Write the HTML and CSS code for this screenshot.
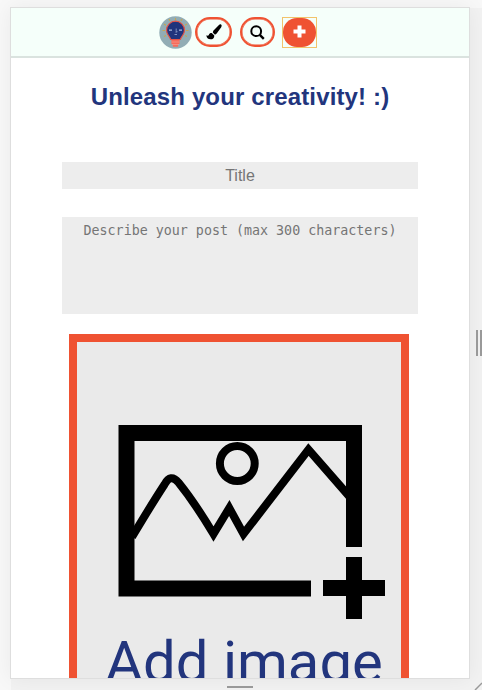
FILE: index.html
```html
<!DOCTYPE html>
<html lang="en">
<head>
<meta charset="utf-8">
<title>New post</title>
<link rel="stylesheet" href="styles.css">
</head>
<body>
<div class="device">
  <nav class="nav">
    <a class="avatar" href="#" aria-label="Home">
      <svg width="33" height="33" viewBox="0 0 33 33">
        <circle cx="16.5" cy="16.5" r="16.2" fill="#92adb5"/>
        <path d="M16.5 2v2M10 3l1 2M23 3l-1 2M5 8l2 1.2M28 8l-2 1.2M3.5 14.5h2.5M27 14.5h2.5M5 20.5l2-1M28 20.5l-2-1" stroke="#c5a654" stroke-width="1.1"/>
        <path d="M12.400 23.500h8.200v4.300l-1.500 1v2h-5.200v-2l-1.500-1z" fill="#f66b5b"/>
        <path d="M12.500 26h8M13 28.500h7" stroke="#f4a59a" stroke-width=".6"/>
        <path d="M16.500 5.200a9 9 0 0 1 9 9c0 4.200-3.200 6-4.200 9.300h-9.600c-1-3.300-4.200-5.100-4.200-9.300a9 9 0 0 1 9-9z" fill="#20347c" stroke="#e75345" stroke-width="1.200"/>
        <path d="M10 14.200h3M20 14.200h3" stroke="#a9b9dc" stroke-width="1.300"/>
        <path d="M17.200 12.500v2l1 1.500h-1.800M15.500 18.500h2.500" fill="none" stroke="#8b9dca" stroke-width=".9"/>
      </svg>
    </a>
    <a class="pill pill-brush" href="#" aria-label="Create">
      <svg width="16" height="16" viewBox="0 0 16 16"><path d="M15 .5c1 .7.700 1.700.200 2.700L10.700 9.500 9 10.700 6.800 8.600l.5-1.800L12.700 1.300C13.500.5 14.300.1 15 .5zM6 9.200l2.300 2.200c.1 2.500-1.500 3.900-3.800 3.900C2 15.300.500 13.600.400 11.200c1 .6 1.900.8 2.400-.3C3.400 9.500 4.600 8.900 6 9.200z"/></svg>
    </a>
    <a class="pill pill-search" href="#" aria-label="Search">
      <svg width="15" height="15" viewBox="0 0 15 15" fill="none" stroke="#000"><circle cx="6.200" cy="6.200" r="4.900" stroke-width="2"/><path d="M9.800 9.800l4 4" stroke-width="2.400"/></svg>
    </a>
    <a class="add" href="#" aria-label="Add post">
      <span class="add-fill"><svg width="13" height="13" viewBox="0 0 13 13"><path d="M6.500 .5v12M.5 6.500h12" stroke="#fff" stroke-width="4"/></svg></span>
    </a>
  </nav>
  <main class="content">
    <h1 class="heading">Unleash your creativity! :)</h1>
    <input class="field title" type="text" placeholder="Title">
    <textarea class="field description" placeholder="Describe your post (max 300 characters)"></textarea>
    <div class="upload">
      <svg class="picture" width="268" height="195" viewBox="0 0 268 195" fill="none" stroke="#000">
        <path d="M236 122V8H8.500v155.500H193" stroke-width="16"/>
        <circle cx="119.300" cy="38.500" r="17.400" stroke-width="8"/>
        <path d="M14 112Q35 77 46.500 59.500Q52.500 48 60.500 57.500Q77 78 95.500 109L111.300 83L125.500 109L190.500 24.500L231 71" stroke-width="8"/>
        <path d="M236 132v62M205 163h62" stroke-width="16"/>
      </svg>
      <div class="caption">Add image</div>
    </div>
  </main>
</div>
<span class="grip-right"></span>
<span class="grip-bottom"></span>
<svg class="grip-corner" width="8" height="8" viewBox="0 0 8 8"><path d="M1 8L8 1" stroke="#999" stroke-width="1.500"/></svg>
</body>
</html>
```
FILE: styles.css
```css
* { box-sizing: border-box; }

body {
  position: relative;
  height: 690px;
  margin: 0;
  padding: 7px 12px 0 10px;
  overflow: hidden;
  background: linear-gradient(#f8f8f8 0 8px, transparent 8px), linear-gradient(90deg, #f8f8f8 0 11px, #f2f2f2 11px);
  font-family: "Liberation Sans", sans-serif;
}

.device {
  display: flex;
  flex-direction: column;
  height: 672px;
  overflow: hidden;
  border: 1px solid #dedede;
  background: #fff;
  box-shadow: 0 0 20px rgba(0, 0, 0, .06);
}

.nav {
  display: flex;
  flex: none;
  align-items: center;
  height: 50px;
  padding-left: 148px;
  border-bottom: 2px solid #dae3df;
  background: #f5fffa;
}

.avatar { display: flex; width: 33px; }

.pill {
  display: flex;
  align-items: center;
  justify-content: center;
  height: 30px;
  border: 2px solid #ef5232;
  border-radius: 15px;
  box-shadow: inset 0 0 0 .5px #ef5232;
}

.pill-brush { width: 37px; margin-left: 3px; }
.pill-search { width: 35px; margin-left: 8px; }

.add {
  width: 35px;
  height: 31px;
  margin-left: 7px;
  border: 1px solid #f2c36b;
}

.add-fill {
  display: flex;
  align-items: center;
  justify-content: center;
  height: 29px;
  padding-bottom: 2px;
  border-radius: 14px;
  background: #ef5232;
}

.content {
  display: flex;
  flex-direction: column;
  align-items: center;
}

.heading {
  margin: 25px 0 0;
  color: #22357d;
  font-size: 24px;
  line-height: 28px;
  letter-spacing: .14px;
  white-space: nowrap;
}

.field {
  width: 356px;
  border: 0;
  background: #ededed;
  text-align: center;
  resize: none;
}

.field::placeholder { color: #757575; }

.title {
  height: 26.5px;
  margin-top: 51px;
  padding: 1px 0 0;
  font: 16px "Liberation Sans", sans-serif;
}

.description {
  height: 97px;
  margin-top: 28.5px;
  padding: 6px 0;
  font: 13.333px/16px "DejaVu Sans Mono", monospace;
}

.upload {
  flex: none;
  display: flex;
  flex-direction: column;
  width: 340px;
  height: 420px;
  margin: 20px 0 0 -2px;
  border: 8px solid #ef5232;
  background: #eaeaea;
}

.picture { margin: 83px 0 0 41px; }

.caption {
  align-self: center;
  margin-top: 8px;
  margin-left: 10px;
  color: #22357d;
  font: 58px/68px Roboto, sans-serif;
  white-space: nowrap;
}

.grip-right {
  position: absolute;
  top: 330px;
  right: 0;
  width: 6px;
  height: 26px;
  border: solid #999;
  border-width: 0 2px;
}

.grip-bottom {
  position: absolute;
  top: 686px;
  left: 227px;
  width: 26px;
  height: 2px;
  background: #999;
}

.grip-corner {
  position: absolute;
  right: 0;
  bottom: 0;
}
```
